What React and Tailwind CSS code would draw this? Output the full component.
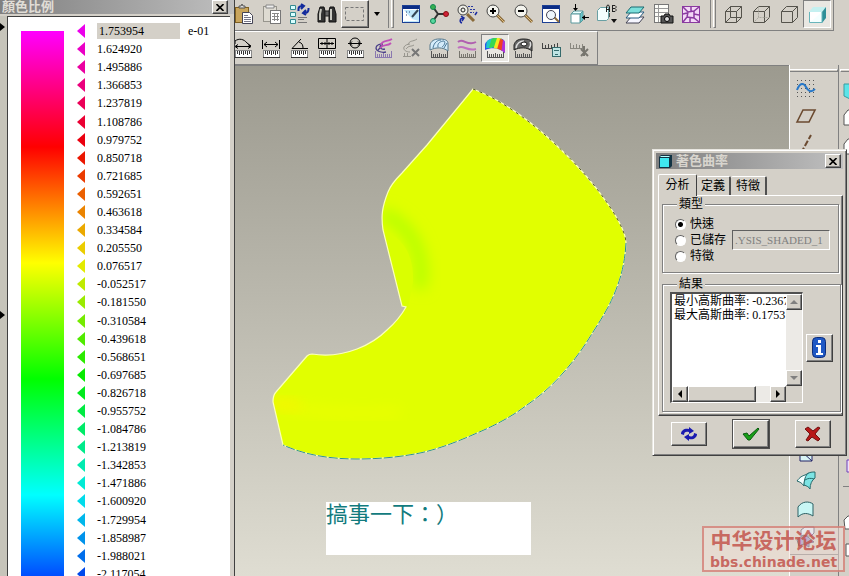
import React from "react";

const SCALE_VALUES = [
  "1.753954", "1.624920", "1.495886", "1.366853", "1.237819", "1.108786",
  "0.979752", "0.850718", "0.721685", "0.592651", "0.463618", "0.334584",
  "0.205550", "0.076517", "-0.052517", "-0.181550", "-0.310584", "-0.439618",
  "-0.568651", "-0.697685", "-0.826718", "-0.955752", "-1.084786", "-1.213819",
  "-1.342853", "-1.471886", "-1.600920", "-1.729954", "-1.858987", "-1.988021",
  "-2.117054",
];

const STOPS = [
  [255, 0, 255],
  [255, 0, 0],
  [255, 255, 0],
  [0, 255, 0],
  [0, 255, 255],
  [0, 0, 255],
];

// Colour of row i: the six stops are spread over 32 rows.
function markerColor(i) {
  const t = i / 6.4;
  const k = Math.min(4, Math.floor(t));
  const f = t - k;
  const c = STOPS[k].map((v, n) => Math.round((v + (STOPS[k + 1][n] - v) * f) * 0.92));
  return `rgb(${c.join(",")})`;
}

const Svg = ({ children, w = 22, h = 22 }) => (
  <svg width={w} height={h} viewBox={`0 0 ${w} ${h}`} fill="none" stroke="#222" strokeWidth="1" className="shrink-0" aria-hidden="true">
    {children}
  </svg>
);

const Ruler = ({ faded }) => (
  <g stroke={faded ? "#8a8880" : "#333"}>
    <rect x="3.5" y="13.5" width="16" height="7" fill="#fff" stroke={faded ? "#aaa8a0" : "#888"} />
    <path d="M5.5 14v3M7.5 14v4M9.5 14v3M11.5 14v4M13.5 14v3M15.5 14v4M17.5 14v3M3 20.500h17" />
  </g>
);

const Ticks = ({ color = "#555" }) => (
  <path stroke={color} d="M3 20.500h17M3.500 14v6M5.500 17v3M7.500 17v3M9.500 17v3M11.500 16v4M13.500 17v3M15.500 17v3M17.500 17v3M19.500 14v6" />
);

const Lens = ({ sign }) => (
  <>
    <path d="M13 12l7 7" stroke="#8a6a3a" strokeWidth="3" />
    <path d="M13 12l7 7" stroke="#e0c080" />
    <circle cx="9" cy="8" r="6" fill="#f4f4ee" stroke="#444" />
    <path d={sign === "+" ? "M9 5v6M6 8h6" : "M6 8h6"} stroke="#000" strokeWidth="2" />
  </>
);

const WindowFrame = () => (
  <>
    <rect x="2.500" y="2.500" width="17" height="17" fill="#fff" stroke="#1c3f94" />
    <path d="M3 4.500h16" stroke="#0a2c86" strokeWidth="3" />
  </>
);

const Cube = ({ kind }) => (
  <g stroke="#55534c">
    {kind === "shaded" ? (
      <g stroke="none">
        <path d="M3 9l4-5h13l-4 5z" fill="#c4f0f0" />
        <path d="M16 9l4-5v11l-4 5z" fill="#2f8f98" />
        <path d="M3 9h13v11H3z" fill="#f4ffff" />
        <path d="M3 20V9h13z" fill="#fff" />
        <path d="M3.500 9v10.500H16V9" stroke="#69b5bb" />
      </g>
    ) : (
      <>
        <path d="M3.500 8.500h11v11h-11zM3.500 8.500l5-5h11l-5 5M19.500 3.500v11l-5 5" />
        {kind === "wire" && <path d="M8.500 3.500v11h11M8.500 14.500l-5 5" />}
        {kind === "hidden" && <path d="M8.500 3.500v11h11M8.500 14.500l-5 5" stroke="#aaa89f" strokeDasharray="2 1" />}
      </>
    )}
  </g>
);

const FILE_ICONS = [
  ["Paste", (
    <Svg>
      <rect x="3.500" y="4.500" width="13" height="15" fill="#c9a55c" stroke="#806020" />
      <path d="M7 5V3h2l1-2 1 2h2v2z" fill="#ddd" stroke="#555" />
      <path d="M10.500 9.500h7l3 3v8h-10z" fill="#fff" stroke="#445" />
      <path d="M12 12.500h4M12 14.500h7M12 16.500h7M12 18.500h7" stroke="#778" />
    </Svg>
  )],
  ["Paste special", (
    <Svg>
      <rect x="3.500" y="3.500" width="13" height="15" fill="#dedbd2" stroke="#97958d" />
      <path d="M6 4V2h8v3H6z" fill="#eee" stroke="#888" />
      <rect x="10.500" y="7.500" width="10" height="13" fill="#fff" stroke="#777" />
      <path d="M12 10.500h7M12 13.500h7M12 16.500h7M14.500 10v8M17.500 10v8" stroke="#888" />
    </Svg>
  )],
  ["Regenerate", (
    <Svg>
      <path d="M2.500 2.500h5v4h-5zM2.500 9.500h5v4h-5zM2.500 16.500h5v4h-5z" fill="#d8ffff" stroke="#348a90" />
      <path d="M10.500 8V6c0-2 1-3 4-3M13 1l3 2-3 3M20.500 5v1c0 3-2 4-4 4M18 7l-3 3 3 2" stroke="#122a9c" strokeWidth="2" />
      <path d="M10 14.500h9M10 16.500h6M10 19.500h9" stroke="#777" />
    </Svg>
  )],
  ["Find", (
    <Svg>
      <path d="M4 4h4l1 4v11H2v-8zM14 4h4l2 7v8h-7V8z" fill="#333" stroke="#111" />
      <path d="M9 8h4v5H9z" fill="#666" />
      <path d="M5 6l-1 5v6M15 6v11" stroke="#c8c8c0" strokeWidth="2" />
    </Svg>
  )],
];

const VIEW_ICONS = [
  ["Repaint", (
    <Svg>
      <WindowFrame />
      <path d="M4 7h15v12H4z" fill="#bfe6fb" stroke="none" />
      <path d="M4 7l8 9 7 2H4z" fill="#fff" stroke="none" />
      <path d="M18 7l-6 7" stroke="#345" strokeWidth="2" />
      <path d="M6 9h1M9 9h1M6 12h1" stroke="#347" />
    </Svg>
  )],
  ["Spin center", (
    <Svg>
      <path d="M5 4l5 7M5 18l5-7h7" stroke="#333" strokeWidth="2" />
      <circle cx="5" cy="4" r="2.500" fill="#38b050" stroke="#185" />
      <circle cx="5" cy="18" r="2.500" fill="#58d8a0" stroke="#185" />
      <circle cx="18" cy="11" r="2.500" fill="#d02038" stroke="#811" />
    </Svg>
  )],
  ["Orient mode", (
    <Svg>
      <path d="M11 11l7 7" stroke="#8a6a3a" strokeWidth="3" />
      <circle cx="7" cy="7" r="5" fill="#efefe8" stroke="#444" />
      <circle cx="7" cy="7" r="2" />
      <path d="M12 3.500h6M14 6.500h5M14 9.500h4" stroke="#2a3aa0" strokeDasharray="2 1" />
      <path d="M6 20c-3-1-2-5 1-5M5 13l3 2-2 3M19 12l2-3" stroke="#1a2aa0" strokeWidth="1.500" />
    </Svg>
  )],
  ["Zoom in", <Svg><Lens sign="+" /></Svg>],
  ["Zoom out", <Svg><Lens sign="-" /></Svg>],
  ["Refit", (
    <Svg>
      <WindowFrame />
      <path d="M14 14l5 5" stroke="#8a6a3a" strokeWidth="2" />
      <circle cx="11" cy="12" r="4.500" fill="#eef6fc" stroke="#445" />
    </Svg>
  )],
  ["Reorient", (
    <Svg>
      <path d="M3 11l3-3h9l-3 3z" fill="#e8ffff" stroke="#5a9a9e" />
      <path d="M12 11l3-3v9l-3 3z" fill="#68c8cc" stroke="#5a9a9e" />
      <path d="M3 11h9v9H3z" fill="#fff" stroke="#5a9a9e" />
      <path d="M7.500 1v6M14 14.500h7" stroke="#000" />
      <path d="M5 5h5l-2.500 3zM17 12v5l-3-2.500z" fill="#000" stroke="none" />
    </Svg>
  )],
  ["Saved view list", (
    <Svg>
      <path d="M1.500 7.500l3-3h8v11l-2 2h-9z" fill="#f4ffff" stroke="#69a0a4" />
      <g stroke="#222">
        <path d="M10.500 9V4l1-2h1l1 2v5M11 6.500h3M16.500 2v7M17 2.500h2l1 1v1l-1 1h-2M19 5.500l1 1v1l-1 1h-2" />
      </g>
      <path d="M13.500 10v4" stroke="#555" />
      <path d="M15 16h6l-3 4z" fill="#111" stroke="none" />
    </Svg>
  )],
  ["Layers", (
    <Svg>
      <path d="M2 20l5-6h13l-5 6z" fill="#f6f6ff" stroke="#445" />
      <path d="M2 15l5-6h13l-5 6z" fill="#fff" stroke="#245a80" />
      <path d="M2 10l5-6h13l-5 6z" fill="#7de0dc" stroke="#1a6a70" />
    </Svg>
  )],
  ["View manager", (
    <Svg>
      <rect x="2.500" y="1.500" width="14" height="18" fill="#fdfdf8" stroke="#777" />
      <path d="M3 5.500h13M3 9.500h13M3 13.500h13M6.500 2v17" stroke="#999" />
      <path d="M9 13h3l1-2h4l1 2h3v7H9z" fill="#555" stroke="#111" />
      <circle cx="15" cy="16" r="2.500" fill="#ddd" stroke="#000" />
    </Svg>
  )],
  ["Mesh surface", (
    <Svg>
      <rect x="2.500" y="3.500" width="17" height="16" fill="#f3d8f6" stroke="#8a3aa0" />
      <path d="M3 4l5 5 6-1 5-4M3 19l4-5 7 1 5 4M8 9l-1 5M14 8v7M3 11l4-1M14 11l5 1M11 4v4M10 15v4" stroke="#8a3aa0" strokeWidth="1.500" />
    </Svg>
  )],
];

const MEASURE_ICONS = [
  ["Curve length", <Svg><Ruler /><path d="M4 9.500h14M6 7.500l-3 2 3 2M16 7.500l3 2-3 2M3 7V4c4-3 9-2 12 2l4 3" stroke="#000" /></Svg>],
  ["Distance", <Svg><Ruler /><path d="M2.500 3v9M19.500 3v9M4 7.500h14M7 5l-3 2.500L7 10M15 5l3 2.500-3 2.500" stroke="#000" /></Svg>],
  ["Angle", <Svg><Ruler /><path d="M13 2L4 11.500h16M11 5c3 1 4 3 4 6" stroke="#000" /></Svg>],
  ["Area", <Svg><Ruler /><path d="M2.500 1.500h17v10h-17zM11 2v9M4 6.500h14M6 5v3M9 5v3M13 5v3M16 5v3" stroke="#000" /></Svg>],
  ["Diameter", <Svg><Ruler /><circle cx="11" cy="6" r="5" stroke="#000" /><path d="M4 6.500h14M8 4.500l-2 2 2 2M14 4.500l2 2-2 2" stroke="#000" /></Svg>],
  ["Curvature", (
    <Svg>
      <Ticks color="#8a78b0" />
      <path d="M14 15c-5 1-10-1-10-4 0-3 4-4 7-4M9 8c-2 2 0 5 4 4M6 13l5-5" stroke="#4a3f88" strokeWidth="1.300" />
      <path d="M9 8c1-5 6-3 11-6M8 11c4-5 7-1 11-5" stroke="#c050b8" strokeWidth="1.800" />
    </Svg>
  )],
  ["Remove curvature", (
    <Svg>
      <path d="M10 15c-4 0-7-2-6-5 1-2 4-3 6-3M8 8c1-5 5-3 9-6M6 12c3-4 5-2 8-4M3 19.500h8M4.500 16v3M7.500 16v3" stroke="#98968e" />
      <path d="M12 12l7 7M19 12l-7 7" stroke="#777" strokeWidth="2" />
    </Svg>
  )],
  ["Section curvature", (
    <Svg>
      <Ticks />
      <path d="M2 13V8c1-4 4-6 9-6 6 0 9 1 9 5v7c-5-4-12-4-18-1z" fill="#d4ebfa" stroke="#56788c" />
      <path d="M5 11C6 5 10 3 13 3M10 10c-1-4 3-6 6-6 2 1 0 5-2 6M16 11l3-5" stroke="#4a7898" />
    </Svg>
  )],
  ["Offset analysis", (
    <Svg>
      <Ticks color="#77756e" />
      <path d="M2 5c5-5 9 5 18 0" stroke="#b060b0" strokeWidth="2" />
      <path d="M2 11c5-4 9 4 18 1" stroke="#c070c0" strokeWidth="2" />
    </Svg>
  )],
  ["Shaded curvature", (
    <Svg>
      <Ticks />
      <clipPath id="shade-dome"><path d="M1 13V7c2-4 6-6 11-6 6 0 9 1 9 6v9c-5-5-13-6-20-3z" /></clipPath>
      <g clipPath="url(#shade-dome)" stroke="none">
        <path d="M0 0h22v22H0z" fill="#2858e8" />
        <path d="M3 2h10l-5 9H2z" fill="#20c8c8" />
        <path d="M8 0l8 1-6 9-5 1z" fill="#38d850" />
        <path d="M13 1h5l-4 12h-5z" fill="#f4e820" />
        <path d="M16 2l4 1-2 13h-6z" fill="#f04020" />
        <path d="M19 3h4v14h-6z" fill="#b030d8" />
      </g>
    </Svg>
  )],
  ["Reflection", (
    <Svg>
      <Ticks />
      <path d="M2 13V8c1-4 4-6 9-6 6 0 9 1 9 5v7c-5-4-12-4-18-1z" fill="#666" stroke="#222" />
      <path d="M4 11c1-5 4-7 8-7" stroke="#ddd" strokeWidth="1.500" />
      <ellipse cx="12" cy="7" rx="3" ry="2" fill="#fff" stroke="#111" />
      <path d="M17 11c2-2 2-4 1-6" stroke="#ddd" strokeWidth="1.500" />
    </Svg>
  )],
  ["Saved analysis", (
    <Svg>
      <path d="M2 11.500h16M2.500 6v5M5.500 8v3M8.500 7v4M11.500 8v3M14.500 7v4M17.500 6v5" stroke="#444" />
      <rect x="12.500" y="10.500" width="8" height="9" fill="#bfe4e4" stroke="#356a6c" />
      <path d="M14 13.500h5M15 17.500h3" stroke="#356a6c" />
    </Svg>
  )],
  ["Hide analysis", (
    <Svg>
      <path d="M2 11.500h14M2.500 6v5M5.500 8v3M8.500 7v4M11.500 8v3M14.500 7v4" stroke="#8a8880" />
      <path d="M13 12l7 7M20 12l-7 7M16 9v10" stroke="#77756e" strokeWidth="2" />
    </Svg>
  )],
];

const Tool = ({ label, pressed, children }) => (
  <button
    type="button"
    aria-label={label}
    aria-pressed={pressed}
    className={
      "flex h-7 w-7 shrink-0 items-center justify-center " +
      (pressed ? "border border-t-[#808080] border-l-[#808080] border-r-white border-b-white bg-[#e9e7e2]" : "")
    }
  >
    {children}
  </button>
);

const Grip = () => (
  <span className="flex h-7 w-3 shrink-0 justify-center gap-0.5">
    <span className="w-px bg-[#808080]" />
    <span className="w-[3px] border border-t-0 border-l-white border-r-[#808080] border-b-[#808080]" />
  </span>
);

const CloseGlyph = () => (
  <svg width="8" height="7" viewBox="0 0 8 7" stroke="#000" strokeWidth="1.600" aria-hidden="true">
    <path d="M0.500 0l7 7M7.500 0l-7 7" />
  </svg>
);

const RAISED = "border border-t-white border-l-white border-r-[#404040] border-b-[#404040] shadow-[inset_-1px_-1px_0_#808080] bg-[#d4d0c8]";

function ScalePanel() {
  return (
    <aside className="flex w-[234px] shrink-0 flex-col bg-[#d4d0c8]">
      <header className="flex h-[14px] shrink-0 items-center justify-between bg-linear-to-r from-[#808080] to-[#c0c0c0] pr-1.5 pl-0.5">
        <h1 className="text-[13px] leading-[14px] font-bold text-[#e0ddd6]">顏色比例</h1>
        <button type="button" aria-label="Close" className={"flex h-[14px] w-4 items-center justify-center " + RAISED}>
          <CloseGlyph />
        </button>
      </header>
      <div className="flex min-h-0 flex-1 pt-0.5">
        <div className="w-[7px] shrink-0 overflow-hidden bg-[#c6c4ba]">
          <svg width="6" height="320" viewBox="0 0 6 320" fill="#000" aria-hidden="true">
            <path d="M0 7l5 4-5 4zM0 295l5 4-5 4z" />
          </svg>
        </div>
        <div className="mr-1 flex flex-1 overflow-hidden border-t border-l border-[#404040] bg-white pl-[13px]">
          <div className="mt-3.5 h-[580px] w-[43px] shrink-0 bg-[linear-gradient(#f0f,#f00_20%,#ff0_40%,#0f0_60%,#0ff_80%,#00f)]" />
          <ol className="mt-[5px] ml-3 flex h-[561px] flex-1 flex-col text-[12px] leading-4">
            {SCALE_VALUES.map((v, i) => (
              <li key={v} className="flex flex-1 items-center">
                <svg width="9" height="14" viewBox="0 0 9 14" className="shrink-0" aria-hidden="true">
                  <path d="M9 0v14L1 7z" fill={markerColor(i)} />
                </svg>
                {i === 0 ? (
                  <>
                    <input
                      aria-label="Maximum"
                      defaultValue={v}
                      className="ml-3 h-4 w-[83px] bg-[#d4d0c8] px-0.5 outline-none"
                    />
                    <span className="ml-2">e-01</span>
                  </>
                ) : (
                  <span className="ml-3">{v}</span>
                )}
              </li>
            ))}
          </ol>
        </div>
      </div>
    </aside>
  );
}

function Toolbars() {
  return (
    <div className="flex h-[65px] shrink-0 flex-col items-start bg-[#d4d0c8]">
      <div role="toolbar" className="-ml-1.5 flex h-[31px] border-r border-b border-[#808080]">
        {FILE_ICONS.map(([label, icon]) => <Tool key={label} label={label}>{icon}</Tool>)}
        <button type="button" aria-label="Select box" className={"flex h-7 w-7 items-center justify-center " + RAISED}>
          <Svg><rect x="1.500" y="4.500" width="18" height="13" stroke="#777" strokeDasharray="3 2" /></Svg>
        </button>
        <button type="button" aria-label="Selection options" className="flex h-7 w-4 items-center justify-center">
          <svg width="6" height="4" viewBox="0 0 6 4" aria-hidden="true"><path d="M0 0h6L3 4z" /></svg>
        </button>
        <Grip />
        {VIEW_ICONS.map(([label, icon]) => <Tool key={label} label={label}>{icon}</Tool>)}
        <span className="w-0.5" />
        <Grip />
        <Tool label="Wireframe"><Svg><Cube kind="wire" /></Svg></Tool>
        <Tool label="Hidden line"><Svg><Cube kind="hidden" /></Svg></Tool>
        <Tool label="No hidden"><Svg><Cube /></Svg></Tool>
        <Tool label="Shading" pressed><Svg><Cube kind="shaded" /></Svg></Tool>
        <span className="w-0.5" />
      </div>
      <div role="toolbar" className="-ml-1.5 flex h-[34px] items-center border-t border-r border-b border-t-white border-r-[#808080] border-b-[#808080] pr-1">
        {MEASURE_ICONS.map(([label, icon]) => (
          <Tool key={label} label={label} pressed={label === "Shaded curvature"}>{icon}</Tool>
        ))}
      </div>
    </div>
  );
}

function Model() {
  const outline =
    "M473 89C500 99 530 121 553 142C578 165 596 186 610 207C620 222 626 235 626 243C625 262 621 277 617 287C610 306 602 318 593 332C584 347 574 361 563 373C552 386 540 396 527 405C513 416 494 426 477 433C459 441 439 449 420 453C400 457 380 459 357 459C330 459 305 455 283 445L273 402C273 398 273 395 276 392L307 356Q309 354 312 354C331 357 344 354 357 349C370 344 380 337 387 330C395 323 401 316 406 307L402 306L383 230C381 216 382 207 388 192C391 184 396 179 402 173L427 145Z";
  return (
    <svg width="380" height="390" viewBox="260 80 380 390" className="absolute top-3.5 left-[25px]" role="img" aria-label="Shaded curvature model">
      <defs>
        <clipPath id="body"><path d={outline} /></clipPath>
        <filter id="soft" x="-50%" y="-50%" width="200%" height="200%"><feGaussianBlur stdDeviation="7" /></filter>
      </defs>
      <path d={outline} fill="#e1ff00" />
      <g clipPath="url(#body)">
        <path d="M382 214C404 222 419 242 421 268Q422 280 418 288" fill="none" stroke="#b8ff00" strokeWidth="14" filter="url(#soft)" />
        <path d="M384 232C405 238 414 258 413 282L408 308H402z" fill="#daff00" />
        <path d="M265 400C300 412 350 416 400 412" fill="none" stroke="#f0ff00" strokeWidth="6" filter="url(#soft)" />
        <path d="M270 400l26 0 8 10-32-2z" fill="#ffee00" opacity="0.700" filter="url(#soft)" />
      </g>
      <path d={outline} fill="none" stroke="#faffb8" strokeWidth="1.200" />
      <path d="M473 89C500 99 530 121 553 142C578 165 596 186 610 207C620 222 626 235 626 243" fill="none" stroke="#55572c" strokeDasharray="3 4" />
      <path d="M626 243C625 262 621 277 617 287C610 306 602 318 593 332C584 347 574 361 563 373C552 386 540 396 527 405C513 416 494 426 477 433C459 441 439 449 420 453C400 457 380 459 357 459C330 459 305 455 283 445" fill="none" stroke="#2f8e93" strokeDasharray="9 2" />
    </svg>
  );
}

function SideTools() {
  return (
    <>
      <div role="toolbar" className="flex w-[49px] shrink-0 flex-col border-l border-white bg-[#d4d0c8] pt-1">
        <span className="h-[3px] shrink-0 border border-l-0 border-t-white border-r-[#808080] border-b-[#808080]" />
        <div className="flex h-[483px] shrink-0 flex-col border-b border-[#808080] pt-0.5 pl-0.5">
          <Tool label="Curve"><Svg>
            <path d="M2 3.500h18M2 7.500h18M2 11.500h18M2 15.500h18M2 19.500h18" stroke="#555" strokeDasharray="1 3" />
            <path d="M2 13C5 5 9 6 11 10s5 6 9 2" stroke="#2878c8" strokeWidth="2" />
          </Svg></Tool>
          <Tool label="Datum plane"><Svg><path d="M2 17L8 5h12l-6 12z" stroke="#6b4a30" strokeWidth="1.600" /></Svg></Tool>
          <Tool label="Datum axis"><Svg><path d="M6 20l10-18" stroke="#6b4a30" strokeWidth="2" strokeDasharray="6 2" /></Svg></Tool>
          <span className="h-[281px] shrink-0" />
          <Tool label="Extrude"><Svg><path d="M5 8h12v11H5zM5 8l12 11" fill="#d8f4f4" stroke="#226" /></Svg></Tool>
          <Tool label="Sweep"><Svg>
            <path d="M2 11c3-4 5-5 8-6l4-2c-3 3-5 8-5 13-2-3-4-4-7-5z" fill="#f4ffff" stroke="#266a6c" />
            <path d="M12 4c3-2 5-2 8-2v6c-3 2-5 6-5 11-1-2-3-3-6-4 0-4 1-8 3-11z" fill="#7ce4e4" stroke="#266a6c" />
            <path d="M10 10c3-2 6-2 9-1" stroke="#266a6c" />
          </Svg></Tool>
          <Tool label="Boundary blend"><Svg><path d="M3 19V9C7 3 14 3 18 6v12c-5-3-10-4-15 1z" fill="#c8f6f4" stroke="#2c6064" /></Svg></Tool>
          <Tool label="Style"><Svg>
            <path d="M6 4l4-3h9v6l-3 3H6z" fill="#e0f0ff" stroke="#446" />
            <path d="M2 14l6-5 5 2 6 5-5 1v4l-5-3-5 2z" fill="#8c88c8" stroke="#446" />
          </Svg></Tool>
        </div>
      </div>
      <div className="flex w-[11px] shrink-0 flex-col overflow-hidden border-l border-[#808080] bg-[#d4d0c8] pt-1">
        <span className="ml-px h-[3px] shrink-0 border border-r-0 border-t-white border-l-white border-b-[#808080]" />
        <svg width="10" height="504" viewBox="0 0 10 504" fill="#fff" stroke="#555" className="shrink-0" aria-hidden="true">
          <path d="M5 12h6v15L5 24z" fill="#5ce4e8" stroke="#389ca0" />
          <path d="M5 43l4-5h4v15H5zM5 72l4-5h4v15H5z" />
          <path d="M8 388h6v12H8z" fill="#ece0fa" stroke="#7040b8" />
          <path d="M4 414.500h6" stroke="#808080" />
          <path d="M5 448l4-4h4v13H6zM7 472h8v12H7z" />
        </svg>
      </div>
    </>
  );
}

const Arrow = ({ d, color = "#000" }) => (
  <svg width="8" height="8" viewBox="0 0 8 8" fill={color} aria-hidden="true"><path d={d} /></svg>
);

const FIELDSET = "border border-[#808080] shadow-[1px_1px_0_#fff,inset_1px_1px_0_#fff]";

function RadioRow({ label, checked }) {
  return (
    <label className="flex h-4 items-center gap-1">
      <input
        type="radio"
        name="kind"
        defaultChecked={checked}
        className="size-[11px] appearance-none rounded-full border border-t-[#606060] border-l-[#606060] border-r-white border-b-white bg-white checked:bg-[radial-gradient(#000_2px,#fff_3px)]"
      />
      {label}
    </label>
  );
}

function Dialog() {
  return (
    <section
      role="dialog"
      aria-label="著色曲率"
      className="absolute top-[149px] right-0.5 flex w-[195px] flex-col border border-t-[#e8e6e0] border-l-[#e8e6e0] border-r-[#404040] border-b-[#404040] bg-[#d4d0c8] p-[3px] text-[12px] leading-4 shadow-[inset_1px_1px_0_#fff,inset_-1px_-1px_0_#808080]"
    >
      <header className="flex h-4 items-center bg-linear-to-r from-[#808080] to-[#c0c0c0] pr-0.5 pl-[3px]">
        <svg width="13" height="13" viewBox="0 0 13 13" aria-hidden="true">
          <path d="M0 2l2-2h11v11l-2 2H0z" fill="#134" />
          <path d="M1 3h9v9H1z" fill="#40e8f0" />
          <path d="M1 2l1-1h9l-1 1z" fill="#b8ffff" />
        </svg>
        <h2 className="ml-1 flex-1 text-[13px] font-bold text-[#d8d5ce]">著色曲率</h2>
        <button type="button" aria-label="Close" className={"flex h-[14px] w-4 items-center justify-center " + RAISED}>
          <CloseGlyph />
        </button>
      </header>
      <div role="tablist" className="mt-[5px] flex items-end pl-0.5">
        <button role="tab" aria-selected="true" className="relative z-10 -mb-px h-[22px] w-[39px] rounded-t-xs border border-b-0 border-t-white border-l-white border-r-[#404040] bg-[#d4d0c8] pb-0.5">分析</button>
        <button role="tab" aria-selected="false" className="h-[19px] w-[34px] rounded-t-xs border-t border-r-2 border-t-white border-r-[#505050]">定義</button>
        <button role="tab" aria-selected="false" className="h-[19px] w-9 rounded-t-xs border-t border-r-2 border-t-white border-r-[#505050]">特徵</button>
      </div>
      <div className="ml-0.5 border border-t-white border-l-white border-r-[#404040] border-b-[#404040] px-[3px] pb-[3px] shadow-[inset_-1px_-1px_0_#808080]">
        <fieldset className={"flex h-[77px] flex-col px-3 " + FIELDSET}>
          <legend className="ml-0.5 bg-[#d4d0c8] px-0.5">類型</legend>
          <div className="flex items-center gap-1.5 pt-1">
            <div className="flex shrink-0 flex-col">
              <RadioRow label="快速" checked />
              <RadioRow label="已儲存" />
              <RadioRow label="特徵" />
            </div>
            <input
              aria-label="已儲存"
              disabled
              defaultValue=".YSIS_SHADED_1"
              className="-mr-1 h-5 w-0 flex-1 border border-t-[#606060] border-l-[#606060] border-r-white border-b-white px-0.5 text-[11px] text-[#808080]"
            />
          </div>
        </fieldset>
        <fieldset className={"mt-[3px] h-[136px] px-[7px] " + FIELDSET}>
          <legend className="ml-[7px] bg-[#d4d0c8] px-0.5">結果</legend>
          <div className="flex items-center gap-[3px]">
            <div className="grid h-[111px] w-[133px] shrink-0 grid-cols-[1fr_16px] grid-rows-[1fr_16px] border-t-2 border-l-2 border-r border-b border-t-[#505050] border-l-[#505050] border-r-white border-b-white">
              <div className="overflow-hidden bg-white pl-0.5 leading-[14px] whitespace-nowrap">
                <p>最小高斯曲率: -0.2367</p>
                <p>最大高斯曲率: 0.1753</p>
              </div>
              <div className="flex flex-col justify-between bg-[#eceae6]">
                <button type="button" aria-label="Scroll up" className={"flex h-4 items-center justify-center " + RAISED}>
                  <Arrow d="M0 6h8L4 2z" color="#808080" />
                </button>
                <button type="button" aria-label="Scroll down" className={"flex h-4 items-center justify-center " + RAISED}>
                  <Arrow d="M0 2h8L4 6z" color="#808080" />
                </button>
              </div>
              <div className="flex bg-[#eceae6]">
                <button type="button" aria-label="Scroll left" className={"flex w-4 items-center justify-center " + RAISED}>
                  <Arrow d="M6 0v8L2 4z" />
                </button>
                <span className={"w-[68px] " + RAISED} />
                <button type="button" aria-label="Scroll right" className={"ml-auto flex w-4 items-center justify-center " + RAISED}>
                  <Arrow d="M2 0v8l4-4z" />
                </button>
              </div>
              <span className="bg-[#d4d0c8]" />
            </div>
            <button type="button" aria-label="Information" className={"flex h-7 w-[27px] shrink-0 items-center justify-center " + RAISED}>
              <svg width="15" height="21" viewBox="0 0 15 21" aria-hidden="true">
                <rect x="0.500" y="0.500" width="13" height="20" rx="4" fill="#1f58c4" stroke="#0c2d7c" />
                <path d="M6 3h3v3H6zM4 8h5v8h2v2H4v-2h2v-6H4z" fill="#fff" />
              </svg>
            </button>
          </div>
        </fieldset>
      </div>
      <footer className="flex items-center justify-between pt-1 pr-3 pb-1 pl-[15px]">
        <button type="button" aria-label="Repeat" className={"flex h-6 w-9 items-center justify-center " + RAISED}>
          <svg width="18" height="14" viewBox="0 0 18 14" fill="#1a1ab0" aria-hidden="true">
            <path d="M1 7c0-4 4-6 8-5V0l5 4-5 3V5C6 4 4 5 4 8zM17 7c0 4-4 6-8 5v2l-5-4 5-3v2c3 1 5 0 5-3z" />
          </svg>
        </button>
        <button type="button" aria-label="OK" className={"flex h-7 w-9 items-center justify-center outline outline-[#505050] " + RAISED}>
          <svg width="18" height="14" viewBox="0 0 18 14" aria-hidden="true">
            <path d="M1 7l4-1 2 3 9-8 1 1-9 11H6z" fill="#18a018" stroke="#0a5a10" />
          </svg>
        </button>
        <button type="button" aria-label="Cancel" className={"flex h-7 w-9 items-center justify-center " + RAISED}>
          <svg width="18" height="16" viewBox="0 0 18 16" aria-hidden="true">
            <path d="M1 3l3-2 5 4 5-4 2 1-5 6 5 5-2 2-6-4-4 4-2-1 4-6z" fill="#b81818" stroke="#701010" />
          </svg>
        </button>
      </footer>
    </section>
  );
}

export default function App() {
  return (
    <div className="relative flex h-screen w-full overflow-hidden bg-[#d4d0c8] font-['Liberation_Serif','Noto_Sans_CJK_TC',serif] text-black">
      <ScalePanel />
      <main className="flex min-w-0 flex-1 flex-col overflow-hidden border-l border-[#404040]">
        <Toolbars />
        <div className="flex min-h-0 flex-1">
          <div className="relative min-w-0 flex-1 overflow-hidden border-t border-[#808080] bg-linear-to-b from-[#9c9a8f] to-[#dfddd2]">
            <Model />
            <p className="absolute top-[436px] left-[91px] h-[53px] w-[205px] bg-white font-['Noto_Sans_CJK_TC',sans-serif] text-[22px] leading-5 text-[#127b7e]">
              搞事一下：）
            </p>
          </div>
          <SideTools />
        </div>
      </main>
      <Dialog />
      <div className="absolute top-[526px] right-1 flex h-[46px] w-[143px] flex-col items-center justify-between border-2 border-[#d07068]/70 bg-[#f0dcd4]/50 text-[#c04a42]/80">
        <span className="font-['Noto_Sans_CJK_SC',sans-serif] text-[21px] leading-[22px] font-bold">中华设计论坛</span>
        <span className="font-['DejaVu_Sans',sans-serif] text-[14px] leading-4 font-bold">bbs.chinade.net</span>
      </div>
    </div>
  );
}
